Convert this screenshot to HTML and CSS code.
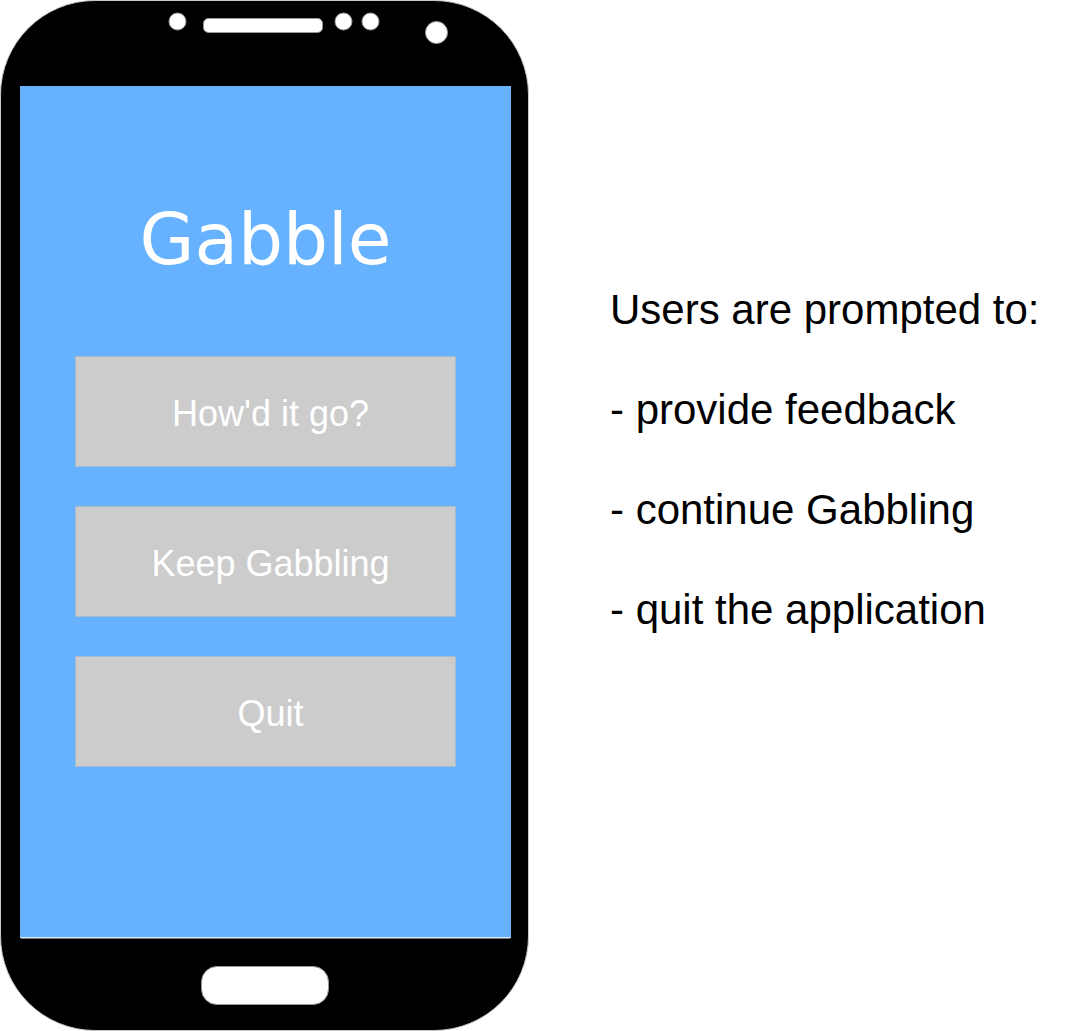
FILE: index.html
```html
<!DOCTYPE html>
<html lang="en">
<head>
<meta charset="utf-8">
<title>Gabble</title>
<link rel="stylesheet" href="styles.css">
</head>
<body>
<main class="page">
  <section class="phone" aria-label="Gabble app">
    <svg class="phone-top" viewBox="0 0 527 85" aria-hidden="true">
      <g class="hole">
        <circle cx="176.500" cy="20.500" r="8.500"/>
        <rect x="202.500" y="17.500" width="119" height="14" rx="5"/>
        <circle cx="342.500" cy="20.500" r="8.500"/>
        <circle cx="369.500" cy="20.500" r="8.500"/>
        <circle cx="435.500" cy="31.500" r="11"/>
      </g>
    </svg>
    <div class="screen">
      <h1 class="title">Gabble</h1>
      <div class="actions">
        <button class="action" type="button">How'd it go?</button>
        <button class="action" type="button">Keep Gabbling</button>
        <button class="action" type="button">Quit</button>
      </div>
    </div>
    <div class="phone-bottom"><button class="home" type="button" aria-label="Home"></button></div>
  </section>
  <section class="notes">
    <p>Users are prompted to:</p>
    <p>- provide feedback</p>
    <p>- continue Gabbling</p>
    <p>- quit the application</p>
  </section>
</main>
</body>
</html>
```

FILE: styles.css
```css
* { box-sizing: border-box; }
body {
  margin: 0;
  background: #fff;
  color: #000;
  font-family: "Liberation Sans", Arial, sans-serif;
}
.page {
  display: grid;
  grid-template-columns: 529fr 461fr;
  column-gap: 81px;
  align-items: start;
}
.phone {
  display: flex;
  flex-direction: column;
  background: #000;
  border: 1px solid #c8c8c8;
  border-radius: 95px;
}
.phone-top {
  display: block;
  width: 100%;
}
.hole {
  fill: #fff;
  stroke: #999;
}
.screen {
  margin: 0 17px 0 19px;
  padding: 112px 55px 170px;
  background: #66b2ff;
  border-bottom: 1px solid #dcecff;
}
.title {
  margin: 0 0 74px;
  font: 400 71px/84px "DejaVu Sans", Verdana, sans-serif;
  color: #fff;
  text-align: center;
}
.actions {
  display: grid;
  gap: 39px;
}
.action {
  height: 111px;
  padding: 4px 0 0 10px;
  border: 1px solid #a6bad0;
  background: #ccc;
  color: #fff;
  font: 36px/40px "Liberation Sans", Arial, sans-serif;
}
.phone-bottom {
  display: flex;
  justify-content: center;
  margin: 0 18px 0 20px;
  padding: 27px 2px 25px 0;
  border-top: 1px solid #777;
}
.home {
  width: 128px;
  height: 39px;
  padding: 0;
  border: 1px solid #999;
  border-radius: 16px;
  background: #fff;
}
.notes {
  display: grid;
  gap: 50px;
  padding-top: 285px;
  font-size: 42px;
  line-height: 50px;
}
.notes p { margin: 0; }
```
